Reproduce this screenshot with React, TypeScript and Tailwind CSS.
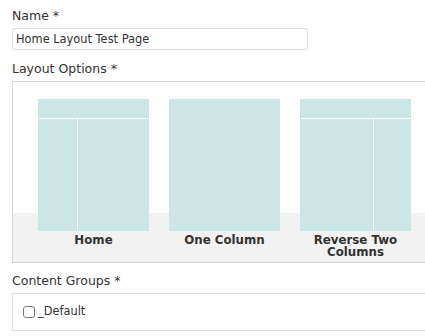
const layouts = [
    { name: 'Home', split: 'left' },
    { name: 'One Column', split: 'none' },
    { name: 'Reverse Two Columns', split: 'right' },
];

const LayoutTile = ({ split }: { split: string }) => {
    if (split === 'none') {
        return <div className="h-[132px] w-[111px] bg-[#cce5e5]" />;
    }
    return (
        <div className="flex h-[132px] w-[111px] flex-col bg-[#cce5e5]">
            <div className="h-[19px]" />
            <div className="mx-px h-px bg-white" />
            <div className="flex flex-1">
                <div className={split === 'left' ? 'w-[39px]' : 'w-[73px]'} />
                <div className="w-px bg-white" />
                <div className="flex-1" />
            </div>
        </div>
    );
};

export default function App() {
    return (
        <div className="w-[425px] overflow-hidden bg-white pt-[7px] pl-3 text-[#333] font-['DejaVu_Sans',sans-serif]">
            <label className="block text-[12.5px] leading-[18px]">Name *</label>
            <input
                type="text"
                defaultValue="Home Layout Test Page"
                className="mt-[3px] block h-[22px] w-[296px] rounded-[3px] border border-[#dcdcdc] px-[3px] text-[11.4px] text-[#333] outline-none"
            />

            <label className="mt-[10px] block text-[12.5px] leading-[18px]">Layout Options *</label>
            <div className="mt-[3px] h-[182px] w-[440px] shrink-0 border border-[#d4d4d4] bg-[linear-gradient(to_bottom,#ffffff_131px,#f2f2f2_131px)] pt-[17px] pl-[25px]">
                <div className="flex gap-5">
                    {layouts.map((layout) => (
                        <div key={layout.name} className="flex w-[111px] flex-col items-center">
                            <LayoutTile split={layout.split} />
                            <span className="mt-[4px] text-center text-[11.8px] leading-[11.5px] font-bold text-[#333]">
                                {layout.name}
                            </span>
                        </div>
                    ))}
                </div>
            </div>

            <label className="mt-[9px] block text-[12.5px] leading-[18px]">Content Groups *</label>
            <div className="mt-[3px] flex h-[38px] w-[440px] items-center border border-[#dcdcdc] pl-[10px]">
                <span className="h-[12px] w-[12px] rounded-[3px] border border-[#777] bg-white" />
                <span className="ml-[3px] text-[11.4px] text-[#333]">_Default</span>
            </div>
        </div>
    );
}
